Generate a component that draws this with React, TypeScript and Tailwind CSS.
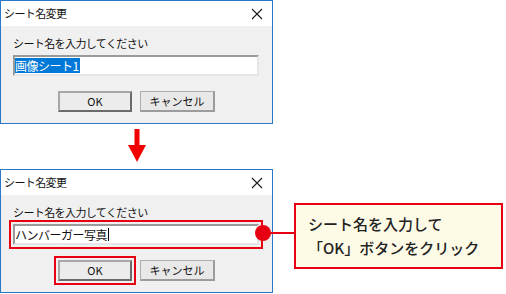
const jp = "font-['Noto_Sans_CJK_JP',sans-serif]";

function CloseIcon() {
  return (
    <svg width="12" height="12" viewBox="0 0 12 12" className="block">
      <path d="M1 1 L11 11 M11 1 L1 11" stroke="#1a1a1a" strokeWidth="1.1" fill="none" />
    </svg>
  );
}

function WinButton({ label, isDefault, marked }: { label: string; isDefault?: boolean; marked?: boolean }) {
  const base = isDefault
    ? "border-[2px] border-t-[#a7a7a7] border-l-[#a7a7a7] border-b-[#6b6b6b] border-r-[#6b6b6b] bg-[#ececec]"
    : "border border-[#adadad] border-b-[2px] border-r-[2px] border-b-[#9c9c9c] border-r-[#9c9c9c] bg-[#e8e8e8]";
  return (
    <div
      className={`h-[21px] flex items-center justify-center text-[11px] leading-none text-[#111] ${base} ${
        isDefault ? "w-[74px]" : "w-[75px]"
      } ${marked ? "outline-2 outline-[#e60012] outline-offset-[2px]" : ""}`}
    >
      {label}
    </div>
  );
}

function Dialog({ second }: { second?: boolean }) {
  return (
    <div className={`w-[273px] h-[124px] border border-[#2b79c6] bg-[#f0f0f0] flex flex-col ${jp}`}>
      <div className="h-[25px] bg-white flex items-center justify-between pl-[3px] pr-[9px]">
        <span className="text-[11px] tracking-[-0.6px] text-[#111] leading-none">シート名変更</span>
        <CloseIcon />
      </div>
      <div className="flex flex-col pl-[12px] pt-[10px]">
        <span className="text-[11px] tracking-[-0.6px] text-[#111] leading-[15px]">シート名を入力してください</span>
        <div
          className={`mt-[4px] w-[246px] h-[21px] bg-white border-[2px] border-t-[#9a9a9a] border-l-[#9a9a9a] border-b-[#e6e6e6] border-r-[#e6e6e6] flex items-center text-[12px] tracking-[-0.5px] leading-none ${
            second ? "outline-2 outline-[#e60012] outline-offset-[2px]" : ""
          }`}
        >
          {second ? (
            <span className="text-[#111] flex items-center">
              ハンバーガー写真
              <span className="inline-block w-px h-[13px] bg-black ml-px" />
            </span>
          ) : (
            <span className="bg-[#0078d7] text-white h-[15px] flex items-center pr-[1px]">画像シート1</span>
          )}
        </div>
        <div className="mt-[15px] ml-[45px] flex gap-[8px]">
          <WinButton label="OK" isDefault marked={second} />
          <WinButton label="キャンセル" />
        </div>
      </div>
    </div>
  );
}

function DownArrow() {
  return (
    <svg width="18" height="34" viewBox="0 0 18 34" className="block">
      <rect x="6.5" y="0" width="5" height="17" fill="#f20000" />
      <polygon points="0,16 18,16 9,33" fill="#f20000" />
    </svg>
  );
}

export default function App() {
  return (
    <div className={`w-[506px] h-[294px] bg-white flex flex-col ${jp}`}>
      <Dialog />
      <div className="h-[45px] flex items-start pl-[128px] pt-[5px]">
        <DownArrow />
      </div>
      <div className="relative flex items-start">
        <Dialog second />
        <span className="absolute left-[255px] top-[56px] w-[16px] h-[16px] rounded-full bg-[#e60012]" />
        <span className="absolute left-[263px] top-[63px] w-[31px] h-[2px] bg-[#e60012]" />
        <div className="ml-[21px] mt-[34px] w-[209px] h-[66px] border-2 border-[#e60012] bg-[#fdfae6] flex flex-col justify-center pl-[12px]">
          <span className="text-[15px] font-medium leading-[24px] text-[#222]">シート名を入力して</span>
          <span className="text-[15px] font-medium leading-[24px] text-[#222]">「OK」ボタンをクリック</span>
        </div>
      </div>
    </div>
  );
}
